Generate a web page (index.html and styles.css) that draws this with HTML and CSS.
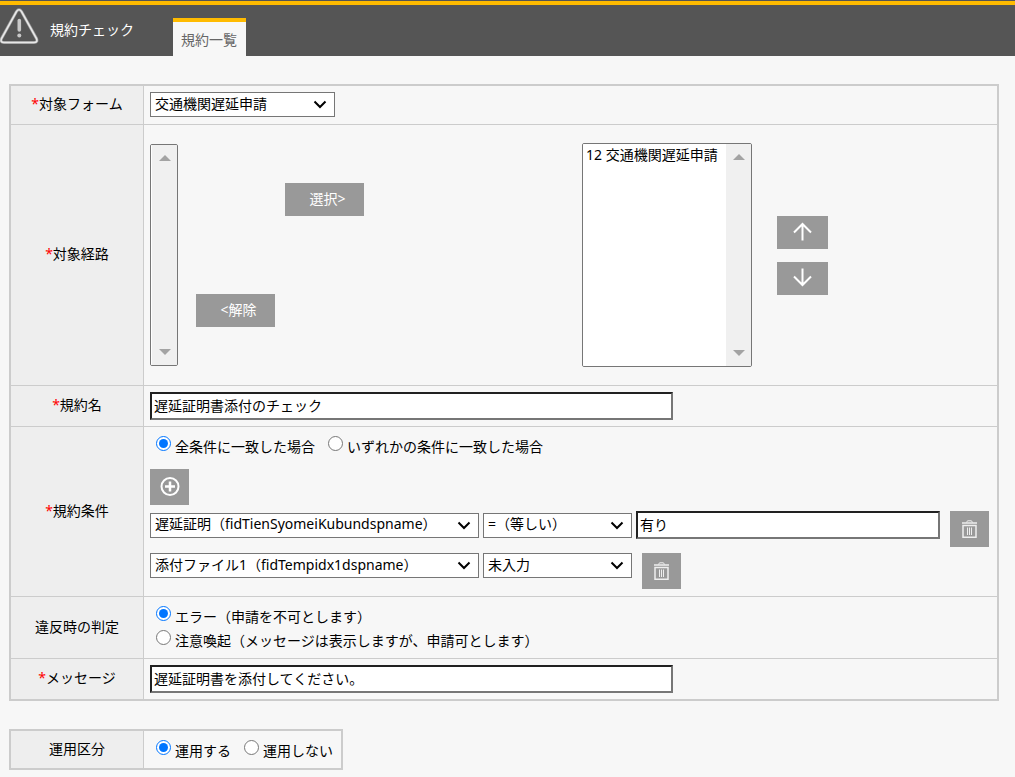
FILE: index.html
```html
<!DOCTYPE html>
<html lang="ja">

<head>
    <meta charset="UTF-8">
    <title>規約チェック</title>
    <link rel="stylesheet" href="styles.css">
</head>

<body>
    <header class="topbar">
        <svg class="warning-icon" width="40" height="38" viewBox="0 0 40 38" fill="none">
            <path d="M16.500 3.500 Q19 0 21.500 3.500 L36.500 30.500 Q38 34.500 34 34.500 H4 Q0 34.500 1.500 30.500 Z" stroke="#999" stroke-width="3" />
            <path d="M16.500 3.500 Q19 0 21.500 3.500 L36.500 30.500 Q38 34.500 34 34.500 H4 Q0 34.500 1.500 30.500 Z" stroke="#e8e8e8" stroke-width="1.600" />
            <path d="M19.300 12.500 V22" stroke="#c8c8c8" stroke-width="3.600" stroke-linecap="round" />
            <circle cx="19.300" cy="27.500" r="2" fill="#c8c8c8" />
        </svg>
        <h1>規約チェック</h1>
        <a class="tab" href="#">規約一覧</a>
    </header>

    <form>
        <table class="settings">
            <tr class="form-row">
                <th><label for="target_form"><span class="required">*</span>対象フォーム</label></th>
                <td>
                    <select id="target_form" class="form-select">
                        <option>交通機関遅延申請</option>
                    </select>
                </td>
            </tr>
            <tr class="route-row">
                <th><label for="selected_routes"><span class="required">*</span>対象経路</label></th>
                <td>
                    <div class="routes">
                        <div class="listbox candidates">
                            <select size="10" aria-label="経路候補"></select>
                            <div class="scroll">
                                <svg width="12" height="6" viewBox="0 0 12 6"><path d="M0 6 L6 0 L12 6 Z" fill="#a3a3a3" /></svg>
                                <svg width="12" height="6" viewBox="0 0 12 6"><path d="M0 0 L6 6 L12 0 Z" fill="#a3a3a3" /></svg>
                            </div>
                        </div>
                        <div class="move-buttons">
                            <button type="button" class="add">選択&gt;</button>
                            <button type="button" class="remove">&lt;解除</button>
                        </div>
                        <div class="listbox selected">
                            <select id="selected_routes" size="10">
                                <option>12 交通機関遅延申請</option>
                            </select>
                            <div class="scroll">
                                <svg width="12" height="6" viewBox="0 0 12 6"><path d="M0 6 L6 0 L12 6 Z" fill="#a3a3a3" /></svg>
                                <svg width="12" height="6" viewBox="0 0 12 6"><path d="M0 0 L6 6 L12 0 Z" fill="#a3a3a3" /></svg>
                            </div>
                        </div>
                        <div class="order-buttons">
                            <button type="button" aria-label="上へ">
                                <svg width="20" height="20" viewBox="0 0 20 20"><path d="M9.500 18.500 V2 M1 10.500 L9.500 2 L18 10.500" /></svg>
                            </button>
                            <button type="button" aria-label="下へ">
                                <svg width="20" height="20" viewBox="0 0 20 20"><path d="M9.500 .5 V17 M1 8.500 L9.500 17 L18 8.500" /></svg>
                            </button>
                        </div>
                    </div>
                </td>
            </tr>
            <tr>
                <th><label for="rule_name"><span class="required">*</span>規約名</label></th>
                <td><input type="text" id="rule_name" class="long-text" value="遅延証明書添付のチェック"></td>
            </tr>
            <tr class="condition-row">
                <th><span class="required">*</span>規約条件</th>
                <td>
                    <div class="radios">
                        <label><input type="radio" name="match" checked>全条件に一致した場合</label>
                        <label><input type="radio" name="match">いずれかの条件に一致した場合</label>
                    </div>
                    <button type="button" class="icon-button add-condition" aria-label="条件を追加">
                        <svg width="20" height="20" viewBox="0 0 20 20">
                            <circle cx="10" cy="9.500" r="8.500" />
                            <path d="M10 4.500 V14.500 M5 9.500 H15" stroke-width="2.500" />
                        </svg>
                    </button>
                    <div class="condition">
                        <div class="fields">
                            <select class="field-select" aria-label="項目">
                                <option>遅延証明（fidTienSyomeiKubundspname）</option>
                            </select>
                            <select class="operator-select" aria-label="演算子">
                                <option>=（等しい）</option>
                            </select>
                            <input type="text" class="value-text" aria-label="値" value="有り">
                        </div>
                        <button type="button" class="icon-button" aria-label="削除">
                            <svg class="trash" width="15" height="18" viewBox="0 0 15 18">
                                <path d="M1 5.500 H14 V17.200 H1 Z M0 3 H15" stroke-width="1.500" />
                                <path d="M5.500 7.500 V15 M7.500 7.500 V15 M9.500 7.500 V15 M4.500 2.500 L5.500 .8 H9.500 L10.500 2.500" />
                            </svg>
                        </button>
                    </div>
                    <div class="condition">
                        <div class="fields">
                            <select class="field-select" aria-label="項目">
                                <option>添付ファイル1（fidTempidx1dspname）</option>
                            </select>
                            <select class="operator-select" aria-label="演算子">
                                <option>未入力</option>
                            </select>
                        </div>
                        <button type="button" class="icon-button" aria-label="削除">
                            <svg class="trash" width="15" height="18" viewBox="0 0 15 18">
                                <path d="M1 5.500 H14 V17.200 H1 Z M0 3 H15" stroke-width="1.500" />
                                <path d="M5.500 7.500 V15 M7.500 7.500 V15 M9.500 7.500 V15 M4.500 2.500 L5.500 .8 H9.500 L10.500 2.500" />
                            </svg>
                        </button>
                    </div>
                </td>
            </tr>
            <tr class="radio-row">
                <th>違反時の判定</th>
                <td>
                    <div class="radios stacked">
                        <label><input type="radio" name="violation" checked>エラー（申請を不可とします）</label>
                        <label><input type="radio" name="violation">注意喚起（メッセージは表示しますが、申請可とします）</label>
                    </div>
                </td>
            </tr>
            <tr>
                <th><label for="message"><span class="required">*</span>メッセージ</label></th>
                <td><input type="text" id="message" class="long-text" value="遅延証明書を添付してください。"></td>
            </tr>
        </table>

        <table class="settings operation">
            <tr class="radio-row">
                <th>運用区分</th>
                <td>
                    <div class="radios">
                        <label><input type="radio" name="operation" checked>運用する</label>
                        <label><input type="radio" name="operation">運用しない</label>
                    </div>
                </td>
            </tr>
        </table>
    </form>
</body>

</html>
```

FILE: styles.css
```css
* {
    box-sizing: border-box;
}

body {
    margin: 0;
    background-color: #f7f7f7;
    color: #000;
}

body,
input,
select,
button {
    font-family: "Noto Sans", "Noto Sans CJK JP", sans-serif;
    font-size: 14px;
    line-height: 20px;
}

/* header */
.topbar {
    display: flex;
    align-items: flex-end;
    height: 56px;
    background: linear-gradient(#555 1px, #ffbb00 1px, #ffbb00 5px, #555 5px);
}

.warning-icon {
    margin-bottom: 10px;
}

h1 {
    width: 123px;
    margin: 0 0 16px 10px;
    font-size: 14px;
    font-weight: normal;
    color: #fff;
}

.tab {
    height: 38px;
    padding: 8px 9px 8px 8px;
    border-top: 4px solid #ffbb00;
    background-color: #f7f7f7;
    color: #666;
    text-decoration: none;
}

/* settings tables */
form {
    padding: 28px 16px 0 9px;
}

.settings {
    width: 100%;
    border: 2px solid #ccc;
    border-spacing: 0;
}

th,
td {
    padding: 6px;
    border-bottom: 1px solid #ccc;
}

th {
    width: 133px;
    padding-bottom: 8px;
    border-right: 1px solid #ccc;
    background-color: #eee;
    font-weight: normal;
}

tr:last-child > * {
    border-bottom: 0;
}

.operation {
    width: 334px;
    margin-top: 28px;
}

.required {
    color: #f00;
}

.form-row td {
    padding-bottom: 7px;
}

.route-row td {
    padding: 18px 6px;
}

.condition-row td {
    padding-bottom: 7px;
}

.radio-row td {
    padding-bottom: 5px;
}

/* controls */
input[type="text"] {
    display: block;
    height: 28px;
    padding: 0 2px 2px;
    border: 2px inset #767676;
    background-color: #fff;
}

select {
    display: block;
    height: 25px;
    padding: 0 24px 2px 4px;
    border: 1px solid #767676;
    border-radius: 0;
    background: #fff url("data:image/svg+xml,%3Csvg xmlns='http://www.w3.org/2000/svg' width='14' height='9' viewBox='0 0 14 9'%3E%3Cpath d='M1.500 1.500 L7 7 L12.500 1.500' fill='none' stroke='black' stroke-width='2'/%3E%3C/svg%3E") no-repeat right 7px center;
    color: #000;
    appearance: none;
}

button {
    display: flex;
    align-items: center;
    justify-content: center;
    padding: 0;
    border: 0;
    background-color: #999;
    color: #fff;
}

button svg {
    fill: none;
    stroke: #fff;
    stroke-width: 2;
}

.form-select {
    width: 185px;
}

.long-text {
    width: 523px;
}

.icon-button {
    width: 39px;
    height: 36px;
}

.trash {
    stroke: #eee;
    stroke-width: 1;
}

.radios {
    display: flex;
    gap: 13px;
    padding: 2px 0 0 6px;
}

.stacked {
    flex-direction: column;
    gap: 0;
}

.radios label {
    display: flex;
    align-items: center;
    line-height: 24px;
}

.radios input {
    width: 15px;
    height: 15px;
    margin: 0 4px 7px 0;
}

/* route picker */
.routes {
    display: flex;
    align-items: center;
}

.listbox {
    display: flex;
    border: 1px solid #767676;
    border-radius: 2px;
    overflow: hidden;
}

.listbox select {
    flex: 1;
    min-width: 0;
    height: 100%;
    padding: 0;
    border: 0;
    background-image: none;
    scrollbar-width: none;
}

.listbox option {
    padding: 0 3px 2px;
    line-height: 18px;
}

.scroll {
    display: flex;
    flex-direction: column;
    justify-content: space-between;
    align-items: center;
    width: 25px;
    padding: 10px 0;
    background-color: #f0f0f0;
}

.candidates {
    width: 28px;
    height: 222px;
}

.selected {
    width: 170px;
    height: 224px;
    margin-left: 218px;
}

.move-buttons {
    display: flex;
    flex-direction: column;
    gap: 78px;
    width: 168px;
    margin-left: 18px;
}

.move-buttons button {
    width: 79px;
    height: 33px;
    padding: 0 0 2px 6px;
}

.move-buttons .add {
    align-self: flex-end;
}

.order-buttons {
    display: flex;
    flex-direction: column;
    gap: 13px;
    margin-left: 25px;
}

.order-buttons button {
    width: 51px;
    height: 33px;
}

/* conditions */
.add-condition {
    margin-top: 10px;
}

.condition {
    display: flex;
    align-items: flex-start;
    gap: 10px;
    margin-top: 6px;
}

.fields {
    display: flex;
    align-items: center;
    gap: 4px;
}

.field-select {
    width: 329px;
}

.operator-select {
    width: 149px;
}

.value-text {
    width: 304px;
}
```
